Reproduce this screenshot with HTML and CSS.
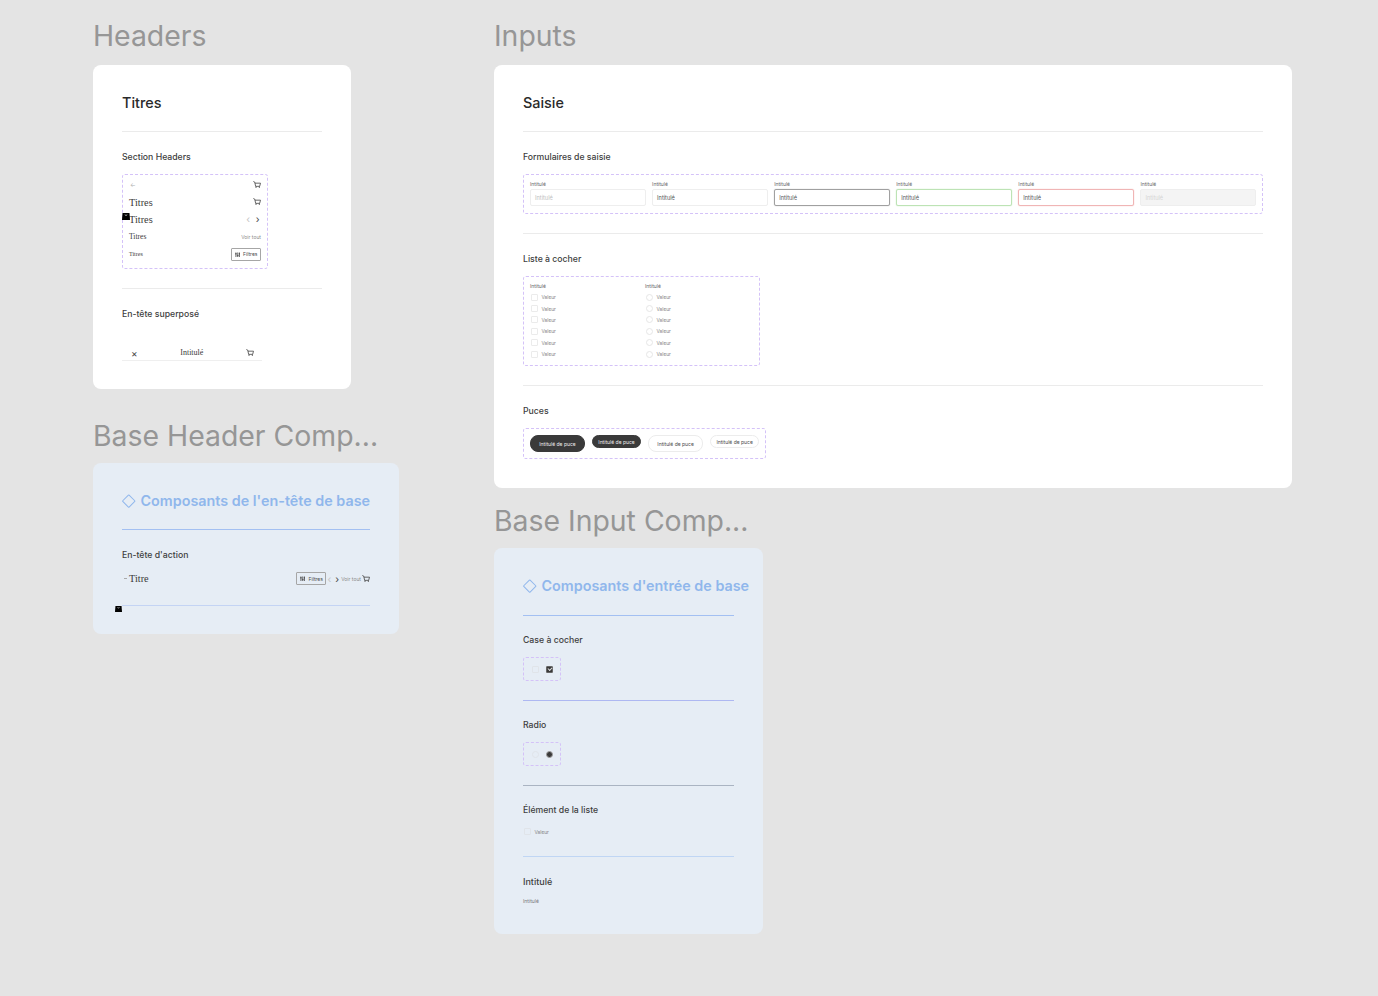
FILE: index.html
```html
<!DOCTYPE html>
<html lang="fr">
<head>
<meta charset="utf-8">
<title>Composants</title>
<link rel="stylesheet" href="styles.css">
</head>
<body>
<svg class="defs" width="0" height="0" aria-hidden="true">
  <symbol id="cart" viewBox="0 0 24 24"><path d="M1 1.500 5 3l3 13h12l2.500-9.500H6M9 16v5M19 16v5" fill="none" stroke="currentColor" stroke-width="2.400"/></symbol>
  <symbol id="sliders" viewBox="0 0 24 24"><path d="M4 2v20M12 2v20M20 2v20M0 8h8M8 16h8M16 8h8" fill="none" stroke="currentColor" stroke-width="3.500"/></symbol>
  <symbol id="bag" viewBox="0 0 8 8"><path d="M.5 1h7l.5 7H0z" fill="#000"/><path d="M3 2.500a1 1 0 0 0 2 0" fill="none" stroke="#fff" stroke-width=".6"/></symbol>
</svg>

<section class="frame f-headers">
  <h2 class="frame-name">Headers</h2>
  <div class="card">
    <h3 class="card-title">Titres</h3>
    <div class="block">
      <h4 class="label">Section Headers</h4>
      <div class="dashed hdr-box">
        <div class="hrow"><span class="back">←</span><svg class="ic"><use href="#cart"/></svg></div>
        <div class="hrow"><span class="serif s10">Titres</span><svg class="ic"><use href="#cart"/></svg></div>
        <div class="hrow"><span class="serif s10">Titres</span><span class="chev"><i class="off">‹</i><i>›</i></span></div>
        <div class="hrow"><span class="serif s7">Titres</span><span class="link">Voir tout</span></div>
        <div class="hrow"><span class="serif s6">Titres</span><span class="btn"><svg class="ic-s"><use href="#sliders"/></svg>Filtres</span></div>
      </div>
      <svg class="bag bag-a"><use href="#bag"/></svg>
    </div>
    <div class="block last">
      <h4 class="label">En-tête superposé</h4>
      <div class="overlay">
        <span class="close">×</span>
        <span class="serif s8">Intitulé</span>
        <svg class="ic"><use href="#cart"/></svg>
      </div>
    </div>
  </div>
</section>

<section class="frame f-basehdr">
  <h2 class="frame-name">Base Header Comp...</h2>
  <div class="card base">
    <h3 class="base-title"><span class="diamond"></span>Composants de l'en-tête de base</h3>
    <div class="block">
      <h4 class="label">En-tête d'action</h4>
      <div class="action">
        <span class="dash"></span><span class="serif s10 titre">Titre</span>
        <span class="action-end">
          <span class="btn"><svg class="ic-s"><use href="#sliders"/></svg>Filtres</span>
          <span class="chev wide"><i class="off">‹</i><i>›</i></span>
          <span class="link">Voir tout</span>
          <svg class="ic"><use href="#cart"/></svg>
        </span>
      </div>
      <svg class="bag bag-b"><use href="#bag"/></svg>
    </div>
  </div>
</section>

<section class="frame f-inputs">
  <h2 class="frame-name">Inputs</h2>
  <div class="card">
    <h3 class="card-title">Saisie</h3>
    <div class="block">
      <h4 class="label">Formulaires de saisie</h4>
      <div class="dashed fields">
        <div class="field"><span class="tiny">Intitulé</span><span class="input ph">Intitulé</span></div>
        <div class="field"><span class="tiny">Intitulé</span><span class="input">Intitulé</span></div>
        <div class="field"><span class="tiny">Intitulé</span><span class="input focus">Intitulé</span></div>
        <div class="field"><span class="tiny">Intitulé</span><span class="input ok">Intitulé</span></div>
        <div class="field"><span class="tiny">Intitulé</span><span class="input err">Intitulé</span></div>
        <div class="field"><span class="tiny">Intitulé</span><span class="input dis">Intitulé</span></div>
      </div>
    </div>
    <div class="block">
      <h4 class="label">Liste à cocher</h4>
      <div class="dashed checks">
        <div class="col">
          <span class="tiny">Intitulé</span>
          <span class="opt"><i class="cb"></i>Valeur</span>
          <span class="opt"><i class="cb"></i>Valeur</span>
          <span class="opt"><i class="cb"></i>Valeur</span>
          <span class="opt"><i class="cb"></i>Valeur</span>
          <span class="opt"><i class="cb"></i>Valeur</span>
          <span class="opt"><i class="cb"></i>Valeur</span>
        </div>
        <div class="col">
          <span class="tiny">Intitulé</span>
          <span class="opt"><i class="rd"></i>Valeur</span>
          <span class="opt"><i class="rd"></i>Valeur</span>
          <span class="opt"><i class="rd"></i>Valeur</span>
          <span class="opt"><i class="rd"></i>Valeur</span>
          <span class="opt"><i class="rd"></i>Valeur</span>
          <span class="opt"><i class="rd"></i>Valeur</span>
        </div>
      </div>
    </div>
    <div class="block last">
      <h4 class="label">Puces</h4>
      <div class="dashed chips">
        <span class="chip dark big">Intitulé de puce</span>
        <span class="chip dark">Intitulé de puce</span>
        <span class="chip big">Intitulé de puce</span>
        <span class="chip">Intitulé de puce</span>
      </div>
    </div>
  </div>
</section>

<section class="frame f-baseinp">
  <h2 class="frame-name">Base Input Comp...</h2>
  <div class="card base">
    <h3 class="base-title nowrap"><span class="diamond"></span>Composants d'entrée de base</h3>
    <div class="block div-violet">
      <h4 class="label">Case à cocher</h4>
      <div class="dashed mini"><i class="cb"></i><i class="cb on"></i></div>
    </div>
    <div class="block div-slate">
      <h4 class="label">Radio</h4>
      <div class="dashed mini"><i class="rd"></i><i class="rd on"></i></div>
    </div>
    <div class="block div-sky">
      <h4 class="label">Élément de la liste</h4>
      <span class="opt single"><i class="cb"></i>Valeur</span>
    </div>
    <div class="block last">
      <h4 class="label big-label">Intitulé</h4>
      <span class="tiny alone">Intitulé</span>
    </div>
  </div>
</section>
</body>
</html>
```

FILE: styles.css
```css
* { box-sizing: border-box; }
html, body { margin: 0; padding: 0; }
body {
  position: relative;
  width: 1378px;
  height: 996px;
  overflow: hidden;
  background: #e4e4e4;
  font-family: Inter, "Liberation Sans", sans-serif;
  color: #333;
}
.defs { position: absolute; }
h2, h3, h4 { margin: 0; font-weight: 500; }
i { font-style: normal; }

.frame { position: absolute; }
.f-headers { left: 93px; top: 17px; width: 258px; }
.f-basehdr { left: 93px; top: 415px; width: 306px; }
.f-inputs { left: 494px; top: 17px; width: 798px; }
.f-baseinp { left: 494px; top: 500px; width: 269px; }

.frame-name {
  height: 48px;
  font-size: 28.400px;
  line-height: 38px;
  font-weight: 400;
  color: #969696;
  white-space: nowrap;
}
.f-basehdr .frame-name, .f-baseinp .frame-name { padding-top: 2px; }
.card {
  position: relative;
  padding: 29px 29px 0;
  background: #fff;
  border-radius: 8px;
}
.f-headers .card { height: 324px; }
.f-inputs .card { height: 423px; }
.card.base { background: #e6edf5; }
.f-basehdr .card { height: 171px; }
.f-baseinp .card { height: 386px; }

.card-title {
  height: 38px;
  border-bottom: 1px solid #ebebeb;
  font-size: 14.400px;
  line-height: 17px;
  color: #2a2a2a;
}
.base-title {
  display: flex;
  align-items: center;
  gap: 7px;
  height: 38px;
  padding-bottom: 19px;
  border-bottom: 1px solid #a3c0f2;
  font-size: 14.350px;
  line-height: 18px;
  font-weight: 600;
  color: #90b7ec;
  white-space: nowrap;
}
.f-baseinp .base-title { height: 39px; padding-bottom: 20px; }
.diamond {
  flex: none;
  width: 9.500px;
  height: 9.500px;
  margin-left: 2px;
  border: 1.500px solid #90b7ec;
  border-radius: 1px;
  transform: rotate(45deg);
}

.block {
  position: relative;
  padding: 20px 0 19px;
  border-bottom: 1px solid #ebebeb;
}
.block.last { border-bottom: 0; }
.label {
  height: 10px;
  margin-bottom: 12px;
  font-size: 8.700px;
  line-height: 11px;
  color: #404040;
  white-space: nowrap;
}
.big-label { font-size: 9px; }
.f-baseinp .block { padding-top: 19px; }

.dashed {
  border: 1px dashed #d4c2f8;
  border-radius: 3px;
}

.serif { font-family: "Liberation Serif", serif; color: #3a3a3a; white-space: nowrap; }
.s10 { font-size: 10.300px; }
.s8 { font-size: 8px; }
.s7 { font-size: 7.600px; }
.s6 { font-size: 6px; }

.hdr-box {
  display: flex;
  flex-direction: column;
  width: 146px;
  height: 95px;
  padding: 1px 6px 0;
}
.hrow {
  display: flex;
  align-items: center;
  justify-content: space-between;
  height: 17.400px;
}
.back { font-size: 6px; color: #b0b0b0; padding-left: 1px; }
.ic { flex: none; width: 8px; height: 8px; color: #444; }
.ic-s { flex: none; width: 5.500px; height: 5.500px; color: #444; }
.chev { display: flex; gap: 5.500px; margin-right: 1.500px; font-size: 10px; line-height: 10px; color: #444; }
.chev .off { color: #c4c4c4; }
.chev.wide { gap: 4px; margin-left: -1px; margin-right: 0; }
.link { font-size: 5px; color: #8a8a8a; white-space: nowrap; }
.btn {
  display: flex;
  align-items: center;
  justify-content: center;
  gap: 3px;
  width: 30px;
  height: 13px;
  border: 1px solid #a6a6a6;
  border-radius: 1px;
  font-size: 5px;
  color: #4a4a4a;
}
.bag { position: absolute; width: 8px; height: 8px; }
.bag-a { left: 0; top: 80px; }
.bag-b { left: -7px; top: 75px; width: 7px; height: 7px; }

.overlay {
  display: flex;
  align-items: center;
  justify-content: space-between;
  width: 140px;
  height: 16px;
  margin-top: 26px;
  padding: 0 8px 0 9px;
  border-bottom: 1px solid #efefef;
}
.close { font-size: 10px; line-height: 10px; color: #444; }

.action {
  display: flex;
  align-items: center;
  height: 13px;
}
.dash { width: 3px; height: 1px; margin: 0 2px; background: #aaa; }
.action-end { display: flex; align-items: center; gap: 2px; margin-left: auto; }
.action-end .link { margin-right: -1px; }
.f-basehdr .block { padding-bottom: 0; height: 76px; border-bottom: 0; }
.f-basehdr .block::after {
  content: "";
  position: absolute;
  left: 0;
  right: 0;
  bottom: 0;
  border-bottom: 1px solid #c4d4f4;
}

.fields {
  display: flex;
  gap: 6.500px;
  height: 40px;
  padding: 6px 6px 0;
}
.field { display: flex; flex: 1; flex-direction: column; min-width: 0; }
.tiny { height: 8px; font-size: 5px; line-height: 6px; color: #666; white-space: nowrap; }
.input {
  display: flex;
  align-items: center;
  height: 17px;
  padding-left: 4px;
  border: 1px solid #eeeeee;
  border-radius: 2px;
  font-size: 5.600px;
  color: #555;
}
.input.ph { color: #c0c0c0; }
.input.focus { border-color: #a0a0a0; box-shadow: 0 0 1px #a0a0a0; }
.input.ok { border-color: #bde3b5; box-shadow: 0 0 1px #9bdc8c; }
.input.err { border-color: #f0b5b5; box-shadow: 0 0 1px #ee9a9a; }
.input.dis { background: #f4f4f4; color: #d4d4d4; }

.checks {
  display: flex;
  width: 237px;
  height: 90px;
  padding: 6px 6px 0;
}
.col { display: flex; flex: none; flex-direction: column; width: 115px; }
.col .tiny { height: 8.500px; }
.opt {
  display: flex;
  align-items: center;
  gap: 4px;
  height: 11.400px;
  font-size: 4.800px;
  color: #808080;
}
.cb {
  flex: none;
  width: 7px;
  height: 7px;
  margin-left: 0.500px;
  border: 1px solid #ebebeb;
  border-radius: 1px;
}
.rd {
  flex: none;
  width: 7px;
  height: 7px;
  margin-left: 0.500px;
  border: 1px solid #e6e6e6;
  border-radius: 50%;
}

.chips {
  display: flex;
  align-items: flex-start;
  gap: 6.800px;
  width: 243px;
  height: 31px;
  padding: 6px 6px 0;
}
.chip {
  display: flex;
  flex: none;
  align-items: center;
  justify-content: center;
  width: 49.500px;
  height: 13px;
  border: 1px solid #ececec;
  border-radius: 8px;
  font-size: 5px;
  color: #4a4a4a;
  white-space: nowrap;
}
.chip.big { width: 55px; height: 17px; }
.chip.dark { background: #3a3a3a; border-color: #3a3a3a; color: #f0f0f0; }

.mini {
  display: flex;
  align-items: center;
  gap: 7px;
  width: 37.500px;
  height: 24px;
  padding-left: 7px;
}
.mini i { width: 7px; height: 7px; }
.cb.on {
  position: relative;
  background: #3a3a3a;
  border-color: #3a3a3a;
}
.cb.on::after {
  content: "";
  position: absolute;
  left: 1px;
  top: 0.500px;
  width: 3px;
  height: 2px;
  border-left: 0.700px solid #ddd;
  border-bottom: 0.700px solid #ddd;
  transform: rotate(-45deg);
}
.rd.on { background: #3a3a3a; border-color: #999; }

.div-violet { height: 85px; border-bottom-color: #aeb8f2; }
.div-slate { height: 85px; border-bottom-color: #aab4c2; }
.div-sky { height: 71px; border-bottom-color: #c0d6f4; }
.single { margin-top: -3px; height: 15px; }
.single .cb { border-color: #e0e4e9; }
.mini .cb, .mini .rd { border-color: #e0e4e9; }
.mini .cb.on { border-color: #666; }
.mini .rd.on { border-color: #a0a0a0; }
.alone { display: block; margin-top: 2px; color: #777; }
```
